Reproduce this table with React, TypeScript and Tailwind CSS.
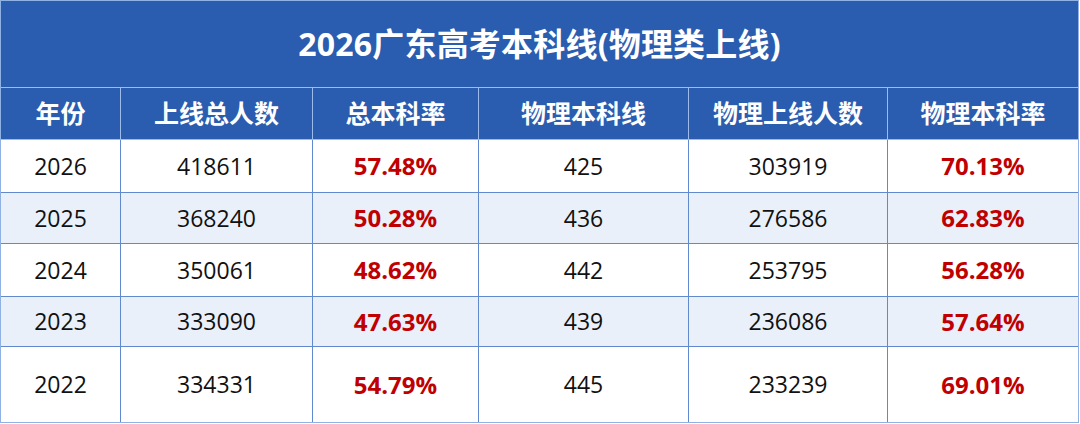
import React from "react";

const cols = ["年份", "上线总人数", "总本科率", "物理本科线", "物理上线人数", "物理本科率"];
const rows: { d: string[]; h: string; alt: boolean }[] = [
  { d: ["2026", "418611", "57.48%", "425", "303919", "70.13%"], h: "h-[53px]", alt: false },
  { d: ["2025", "368240", "50.28%", "436", "276586", "62.83%"], h: "h-[51px]", alt: true },
  { d: ["2024", "350061", "48.62%", "442", "253795", "56.28%"], h: "h-[53px]", alt: false },
  { d: ["2023", "333090", "47.63%", "439", "236086", "57.64%"], h: "h-[50px]", alt: true },
  { d: ["2022", "334331", "54.79%", "445", "233239", "69.01%"], h: "h-[75px]", alt: false },
];

const font = { fontFamily: '"Open Sans", "Noto Sans CJK SC", sans-serif' };

export default function App() {
  return (
    <div className="w-[1080px] h-[424px] bg-white" style={font}>
      <div className="w-[1079px] h-[423px] border border-[#8fb1e4] flex flex-col">
        <div className="h-[87px] bg-[#2a5caf] border-b border-[#9dbcec] flex items-center justify-center shrink-0">
          <span className="text-white text-[32px] font-bold tracking-[0.2px]">2026广东高考本科线(物理类上线)</span>
        </div>
        <div className="grid grid-cols-[120px_192px_166px_210px_199px_190px] h-[52px] bg-[#2a5caf] border-b border-[#9dbcec] shrink-0">
          {cols.map((c, i) => (
            <div
              key={c}
              className={`flex items-center justify-center text-white text-[25px] font-bold ${i < 5 ? "border-r border-[#9dbcec]" : ""}`}
            >
              {c}
            </div>
          ))}
        </div>
        {rows.map((r, ri) => (
          <div
            key={ri}
            className={`grid grid-cols-[120px_192px_166px_210px_199px_190px] ${r.h} shrink-0 ${r.alt ? "bg-[#e9f0fa]" : "bg-white"} ${ri < 4 ? "border-b border-[#6189cd]" : ""}`}
          >
            {r.d.map((v, i) => {
              const pct = i === 2 || i === 5;
              return (
                <div
                  key={i}
                  className={`flex items-center justify-center ${pct ? "text-[24px] text-[#c00000] font-bold" : "text-[23px] text-[#111111]"} ${i < 5 ? "border-r border-[#6189cd]" : ""}`}
                >
                  {v}
                </div>
              );
            })}
          </div>
        ))}
      </div>
    </div>
  );
}
